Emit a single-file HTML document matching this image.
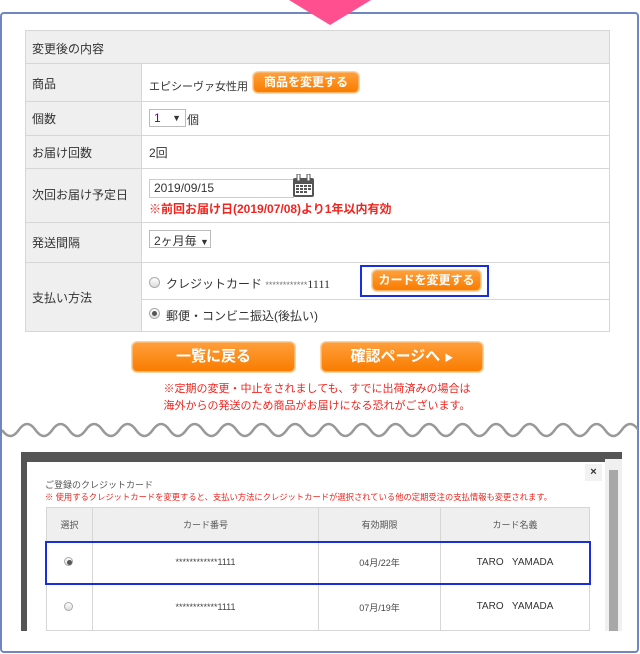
<!DOCTYPE html>
<html><head><meta charset="utf-8"><style>
*{margin:0;padding:0;box-sizing:border-box}
body{width:640px;height:654px;background:#fff;position:relative;overflow:hidden;font-family:"Liberation Sans","Noto Sans CJK JP",sans-serif;font-size:12px;color:#333}
.abs{position:absolute}
.frame{left:0;top:12px;width:639px;height:641px;border:2px solid #6f86c0;border-radius:4px}
.cell{position:absolute;border:1px solid #d6d6d6;background:#fff}
.lab{background:#efefef}
.t{position:absolute;white-space:nowrap}
.obtn{position:absolute;background:linear-gradient(#ff9e3a,#f97d00);border:1px solid #f9b56a;border-radius:5px;color:#fff;font-weight:bold;text-align:center;box-shadow:0 0 0 1px #ffd3a3;white-space:nowrap}
.sel{position:absolute;border:1px solid #bbb;background:#fff;height:18px;font-size:12px;padding:1px 4px;white-space:nowrap}
.red{color:#f0251f}
.radio{position:absolute;width:11px;height:11px;border-radius:50%;border:1px solid #aaa;background:linear-gradient(#fff,#ddd)}
.radio.on:after{content:"";position:absolute;left:2px;top:2px;width:5px;height:5px;border-radius:50%;background:#555}
</style></head><body>
<div class="abs frame"></div>
<svg class="abs" style="left:289px;top:0" width="82" height="26"><polygon points="0,0 82,0 41,25" fill="#ff4f8f"/></svg>

<div class="cell lab" style="left:25px;top:30px;width:585px;height:34px"></div>
<div class="t" style="left:32px;top:40px">変更後の内容</div>

<div class="cell lab" style="left:25px;top:63px;width:117px;height:39px"></div>
<div class="cell" style="left:141px;top:63px;width:469px;height:39px"></div>
<div class="t" style="left:32px;top:75px">商品</div>
<div class="t" style="left:149px;top:78px;font-size:11px">エピシーヴァ女性用</div>
<div class="obtn" style="left:253px;top:72px;width:106px;height:21px;font-size:12px;line-height:19px">商品を変更する</div>

<div class="cell lab" style="left:25px;top:101px;width:117px;height:35px"></div>
<div class="cell" style="left:141px;top:101px;width:469px;height:35px"></div>
<div class="t" style="left:32px;top:110px">個数</div>
<div class="sel" style="left:149px;top:109px;width:37px"><span style="color:#609">1</span><span style="position:absolute;right:4px;font-size:9px;top:3px">▼</span></div>
<div class="t" style="left:187px;top:111px">個</div>

<div class="cell lab" style="left:25px;top:135px;width:117px;height:34px"></div>
<div class="cell" style="left:141px;top:135px;width:469px;height:34px"></div>
<div class="t" style="left:32px;top:144px">お届け回数</div>
<div class="t" style="left:149px;top:144px">2回</div>

<div class="cell lab" style="left:25px;top:168px;width:117px;height:55px"></div>
<div class="cell" style="left:141px;top:168px;width:469px;height:55px"></div>
<div class="t" style="left:32px;top:186px">次回お届け予定日</div>
<div class="abs" style="left:149px;top:179px;width:145px;height:19px;border:1px solid #ccc;padding:1px 4px">2019/09/15</div>
<svg class="abs" style="left:292px;top:174px" width="24" height="24"><rect x="1" y="4" width="21" height="19" rx="2" fill="#555"/><rect x="3" y="10" width="17" height="11" fill="#fff"/><g fill="#555"><rect x="4" y="11" width="3" height="2"/><rect x="8" y="11" width="3" height="2"/><rect x="12" y="11" width="3" height="2"/><rect x="16" y="11" width="3" height="2"/><rect x="4" y="14" width="3" height="2"/><rect x="8" y="14" width="3" height="2"/><rect x="12" y="14" width="3" height="2"/><rect x="16" y="14" width="3" height="2"/><rect x="4" y="17" width="3" height="2"/><rect x="8" y="17" width="3" height="2"/><rect x="12" y="17" width="3" height="2"/></g><rect x="5" y="0" width="3" height="7" fill="#fff" stroke="#555"/><rect x="15" y="0" width="3" height="7" fill="#fff" stroke="#555"/></svg>
<div class="t red" style="left:149px;top:200px;font-weight:bold">※前回お届け日(2019/07/08)より1年以内有効</div>

<div class="cell lab" style="left:25px;top:222px;width:117px;height:41px"></div>
<div class="cell" style="left:141px;top:222px;width:469px;height:41px"></div>
<div class="t" style="left:32px;top:234px">発送間隔</div>
<div class="sel" style="left:149px;top:230px;width:62px">2ヶ月毎 <span style="font-size:9px">▼</span></div>

<div class="cell lab" style="left:25px;top:262px;width:117px;height:70px"></div>
<div class="cell" style="left:141px;top:262px;width:469px;height:38px"></div>
<div class="cell" style="left:141px;top:299px;width:469px;height:33px"></div>
<div class="t" style="left:32px;top:289px">支払い方法</div>
<div class="radio" style="left:149px;top:277px"></div>
<div class="t" style="left:166px;top:275px">クレジットカード <span style="color:#777;font-size:9px">************</span><span style="font-family:'Liberation Serif',serif">1111</span></div>
<div class="abs" style="left:360px;top:265px;width:129px;height:32px;border:2px solid #1a2fdc"></div>
<div class="obtn" style="left:372px;top:270px;width:109px;height:21px;font-size:12px;line-height:19px">カードを変更する</div>
<div class="radio on" style="left:149px;top:308px"></div>
<div class="t" style="left:166px;top:307px">郵便・コンビニ振込(後払い)</div>

<div class="obtn" style="left:132px;top:342px;width:163px;height:30px;font-size:15px;line-height:28px">一覧に戻る</div>
<div class="obtn" style="left:321px;top:342px;width:162px;height:30px;font-size:15px;line-height:28px">確認ページへ <span style="font-size:9px">▶</span></div>
<div class="t red" style="left:0;width:634px;text-align:center;top:381px;font-size:11px;line-height:17px;white-space:normal">※定期の変更・中止をされましても、すでに出荷済みの場合は<br>海外からの発送のため商品がお届けになる恐れがございます。</div>

<svg class="abs" style="left:2px;top:420px" width="636" height="24"><path d="M0,10 Q8.4,22 16.75,10 T33.5,10 T50.25,10 T67,10 T83.75,10 T100.5,10 T117.25,10 T134,10 T150.75,10 T167.5,10 T184.25,10 T201,10 T217.75,10 T234.5,10 T251.25,10 T268,10 T284.75,10 T301.5,10 T318.25,10 T335,10 T351.75,10 T368.5,10 T385.25,10 T402,10 T418.75,10 T435.5,10 T452.25,10 T469,10 T485.75,10 T502.5,10 T519.25,10 T536,10 T552.75,10 T569.5,10 T586.25,10 T603,10 T619.75,10 T636.5,10" fill="none" stroke="#999" stroke-width="2.5"/></svg>

<div class="abs" style="left:21px;top:452px;width:601px;height:179px;background:#555"></div>
<div class="abs" style="left:27px;top:462px;width:578px;height:169px;background:#fff"></div>
<div class="abs" style="left:605px;top:459px;width:17px;height:172px;background:#f0f0f0"></div>
<div class="abs" style="left:609px;top:470px;width:9px;height:161px;background:#a8a8a8"></div>
<div class="abs" style="left:585px;top:464px;width:17px;height:17px;background:#f2f2f2;text-align:center;font-weight:bold;font-size:11px;line-height:17px">×</div>
<div class="t" style="left:45px;top:478px;font-size:9px;color:#555">ご登録のクレジットカード</div>
<div class="t red" style="left:45px;top:491px;font-size:8.3px">※ 使用するクレジットカードを変更すると、支払い方法にクレジットカードが選択されている他の定期受注の支払情報も変更されます。</div>
<div class="cell lab" style="left:46px;top:507px;width:47px;height:35px"></div>
<div class="cell lab" style="left:92px;top:507px;width:227px;height:35px"></div>
<div class="cell lab" style="left:318px;top:507px;width:123px;height:35px"></div>
<div class="cell lab" style="left:440px;top:507px;width:150px;height:35px"></div>
<div class="t" style="left:46px;width:47px;text-align:center;top:518px;font-size:9px;color:#555">選択</div>
<div class="t" style="left:92px;width:227px;text-align:center;top:518px;font-size:9px;color:#555">カード番号</div>
<div class="t" style="left:318px;width:123px;text-align:center;top:518px;font-size:9px;color:#555">有効期限</div>
<div class="t" style="left:440px;width:150px;text-align:center;top:518px;font-size:9px;color:#555">カード名義</div>
<div class="cell" style="left:46px;top:541px;width:47px;height:44px"></div>
<div class="cell" style="left:92px;top:541px;width:227px;height:44px"></div>
<div class="cell" style="left:318px;top:541px;width:123px;height:44px"></div>
<div class="cell" style="left:440px;top:541px;width:150px;height:44px"></div>
<div class="cell" style="left:46px;top:584px;width:47px;height:47px"></div>
<div class="cell" style="left:92px;top:584px;width:227px;height:47px"></div>
<div class="cell" style="left:318px;top:584px;width:123px;height:47px"></div>
<div class="cell" style="left:440px;top:584px;width:150px;height:47px"></div>
<div class="abs" style="left:45px;top:541px;width:546px;height:44px;border:2px solid #1a2fdc"></div>
<div class="radio on" style="left:64px;top:557px;width:9px;height:9px"></div>
<div class="radio" style="left:64px;top:602px;width:9px;height:9px"></div>
<div class="t" style="left:92px;width:227px;text-align:center;top:557px;font-size:9px;color:#444">************1111</div>
<div class="t" style="left:92px;width:227px;text-align:center;top:602px;font-size:9px;color:#444">************1111</div>
<div class="t" style="left:318px;width:123px;text-align:center;top:556px;font-size:9px;color:#444">04月/22年</div>
<div class="t" style="left:318px;width:123px;text-align:center;top:601px;font-size:9px;color:#444">07月/19年</div>
<div class="t" style="left:440px;width:150px;text-align:center;top:557px;font-size:10px;color:#333">TARO&nbsp;&nbsp;&nbsp;YAMADA</div>
<div class="t" style="left:440px;width:150px;text-align:center;top:601px;font-size:10px;color:#333">TARO&nbsp;&nbsp;&nbsp;YAMADA</div>
</body></html>
